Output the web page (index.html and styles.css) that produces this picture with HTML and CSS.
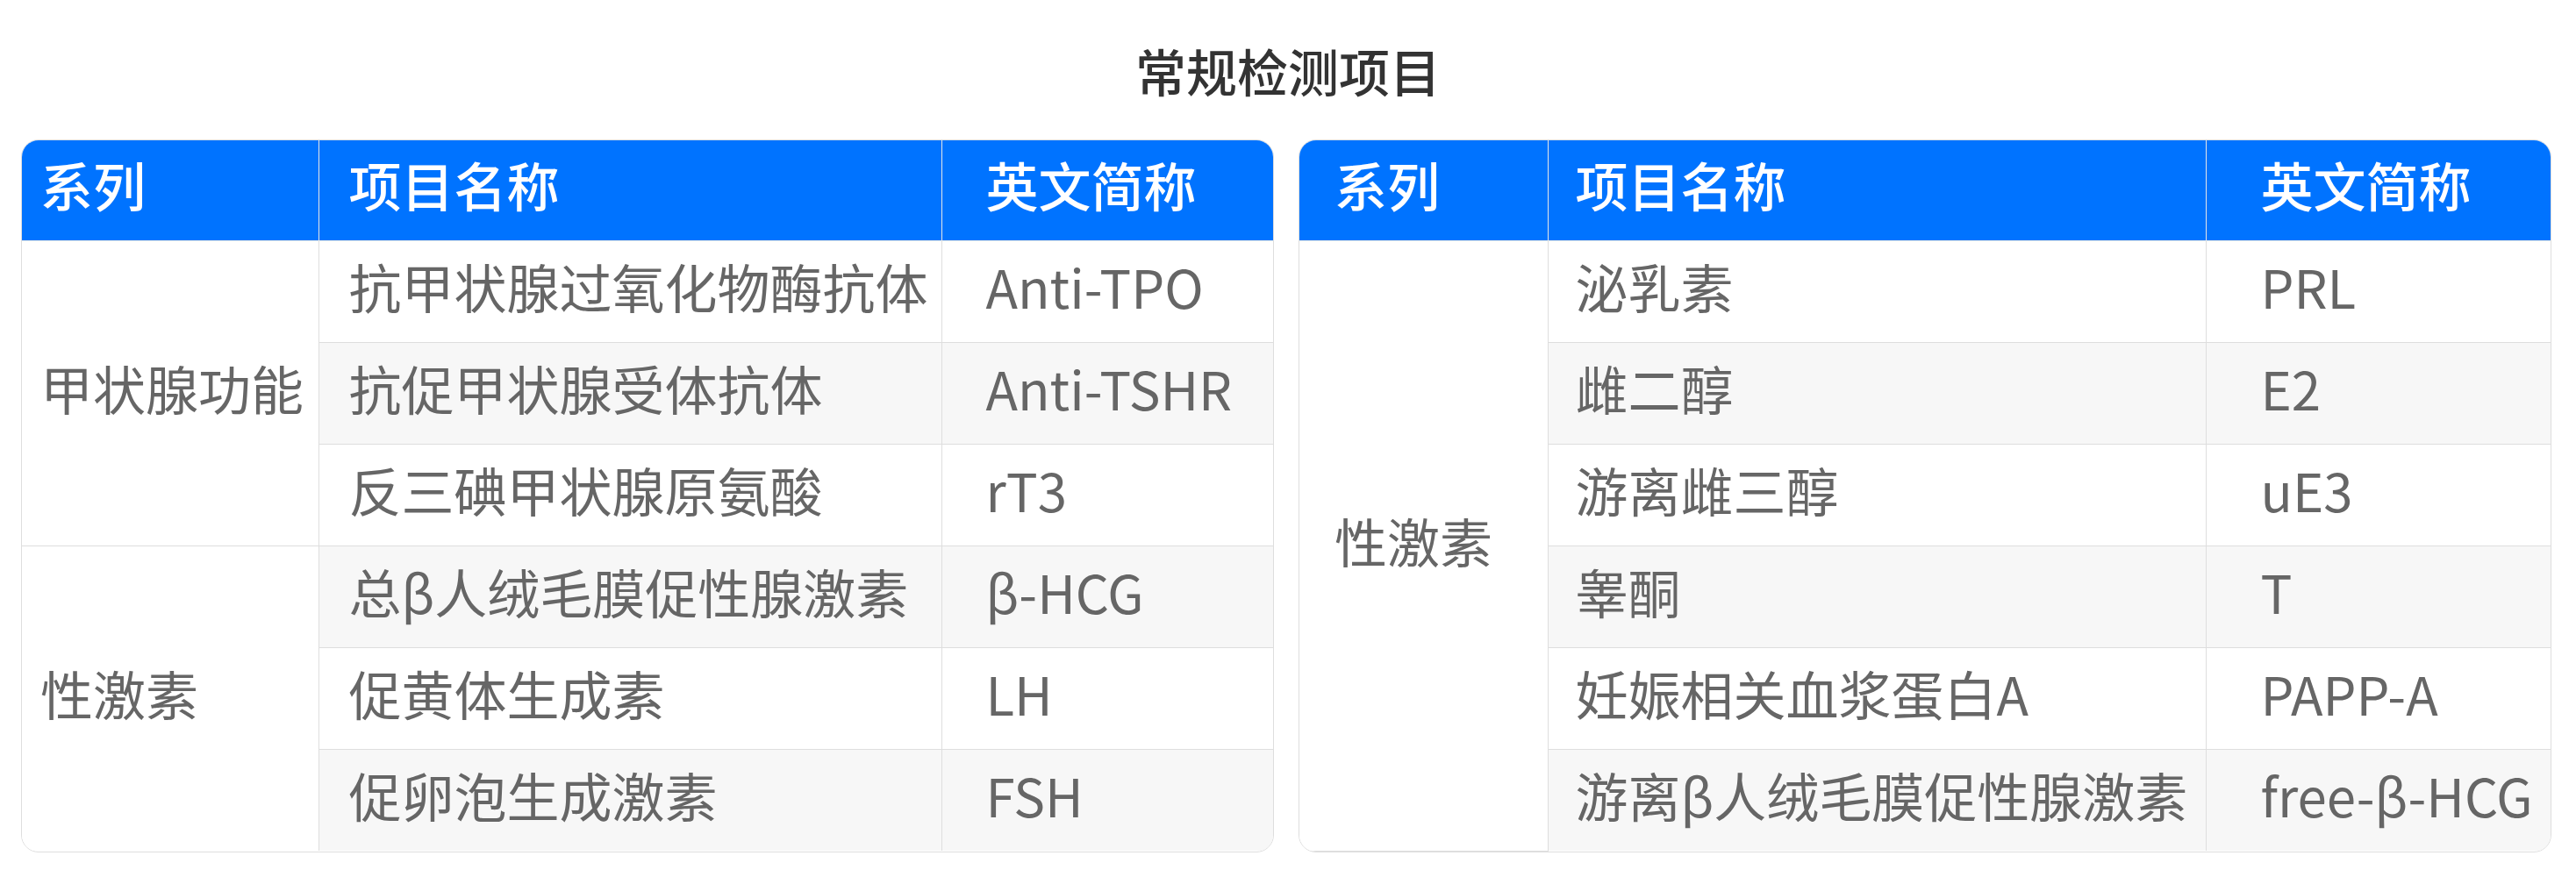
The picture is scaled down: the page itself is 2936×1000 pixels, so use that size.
FILE: index.html
```html
<!doctype html>
<html lang="zh-CN">
    <head>
        <meta charset="UTF-8" />
        <meta name="viewport" content="width=device-width, initial-scale=1.0" />
        <title>常规检测项目</title>
        <link rel="stylesheet" href="styles.css">
    </head>
    <body>
        <h1 class="title">常规检测项目</h1>

        <div class="tables">
            <!-- 甲状腺 + 性激素 -->
            <div class="panel panel-left">
                <table class="items">
                    <colgroup>
                        <col class="col-series" />
                        <col class="col-name" />
                        <col />
                    </colgroup>
                    <thead>
                        <tr>
                            <th class="series">系列</th>
                            <th class="name">项目名称</th>
                            <th class="abbr">英文简称</th>
                        </tr>
                    </thead>
                    <tbody>
                        <tr>
                            <td class="series" rowspan="3">甲状腺功能</td>
                            <td class="name">抗甲状腺过氧化物酶抗体</td>
                            <td class="abbr">Anti-TPO</td>
                        </tr>
                        <tr>
                            <td class="name">抗促甲状腺受体抗体</td>
                            <td class="abbr">Anti-TSHR</td>
                        </tr>
                        <tr>
                            <td class="name">反三碘甲状腺原氨酸</td>
                            <td class="abbr">rT3</td>
                        </tr>
                        <tr>
                            <td class="series" rowspan="3">性激素</td>
                            <td class="name">总β人绒毛膜促性腺激素</td>
                            <td class="abbr">β-HCG</td>
                        </tr>
                        <tr>
                            <td class="name">促黄体生成素</td>
                            <td class="abbr">LH</td>
                        </tr>
                        <tr>
                            <td class="name">促卵泡生成激素</td>
                            <td class="abbr">FSH</td>
                        </tr>
                    </tbody>
                </table>
            </div>

            <!-- 性激素 -->
            <div class="panel panel-right">
                <table class="items">
                    <colgroup>
                        <col class="col-series" />
                        <col class="col-name" />
                        <col />
                    </colgroup>
                    <thead>
                        <tr>
                            <th class="series">系列</th>
                            <th class="name">项目名称</th>
                            <th class="abbr">英文简称</th>
                        </tr>
                    </thead>
                    <tbody>
                        <tr>
                            <td class="series" rowspan="6">性激素</td>
                            <td class="name">泌乳素</td>
                            <td class="abbr">PRL</td>
                        </tr>
                        <tr>
                            <td class="name">雌二醇</td>
                            <td class="abbr">E2</td>
                        </tr>
                        <tr>
                            <td class="name">游离雌三醇</td>
                            <td class="abbr">uE3</td>
                        </tr>
                        <tr>
                            <td class="name">睾酮</td>
                            <td class="abbr">T</td>
                        </tr>
                        <tr>
                            <td class="name">妊娠相关血浆蛋白A</td>
                            <td class="abbr">PAPP-A</td>
                        </tr>
                        <tr>
                            <td class="name">游离β人绒毛膜促性腺激素</td>
                            <td class="abbr">free-β-HCG</td>
                        </tr>
                    </tbody>
                </table>
            </div>
        </div>
    </body>
</html>
```

FILE: styles.css
```css
* {
    margin: 0;
    padding: 0;
    box-sizing: border-box;
}

body {
    font-family: "Noto Sans CJK SC", "Noto Sans", sans-serif;
    background: #fff;
    color: #666;
}

.title {
    padding-top: 40px;
    margin-bottom: 39px;
    font-size: 58px;
    line-height: 80px;
    font-weight: 500;
    color: #333;
    text-align: center;
}

.tables {
    display: flex;
    gap: 28px;
    padding: 0 28px 0 24px;
}

.panel {
    flex: 1;
    border: 1px solid #dedede;
    border-radius: 20px;
    overflow: hidden;
}

.items {
    width: 100%;
    border-collapse: collapse;
    table-layout: fixed;
    font-size: 60px;
}

.items th,
.items td {
    text-align: left;
    vertical-align: middle;
    padding-bottom: 14px;
    border: 1px solid #dedede;
    white-space: nowrap;
}

.items tr > :first-child {
    border-left: none;
}

.items tr > :last-child {
    border-right: none;
}

.items thead th {
    border-top: none;
}

.items tbody tr:last-child td,
.items td.series:last-child {
    border-bottom: none;
}

.items tbody td.series {
    border-bottom: 1px solid #dedede;
}

.items tbody tr:nth-child(4) td.series {
    border-bottom: none;
}

.items th {
    height: 114px;
    background: #0073ff;
    color: #fff;
    font-weight: 500;
    border-color: #e6e6e6;
}

.items td {
    height: 116px;
    background: #fff;
}

.items tbody tr:nth-child(even) td:not(.series) {
    background: #f7f7f7;
}

/* colonnes - tableau de gauche */
.panel-left .col-series {
    width: 338px;
}

.panel-left .col-name {
    width: 710px;
}

.panel-left .series {
    padding-left: 21px;
}

.panel-left .name {
    padding-left: 34px;
}

.panel-left .abbr {
    padding-left: 50px;
}

/* colonnes - tableau de droite */
.panel-right .col-series {
    width: 283px;
}

.panel-right .col-name {
    width: 750px;
}

.panel-right .series {
    padding-left: 40px;
}

.panel-right .name {
    padding-left: 31px;
}

.panel-right .abbr {
    padding-left: 62px;
}
```
